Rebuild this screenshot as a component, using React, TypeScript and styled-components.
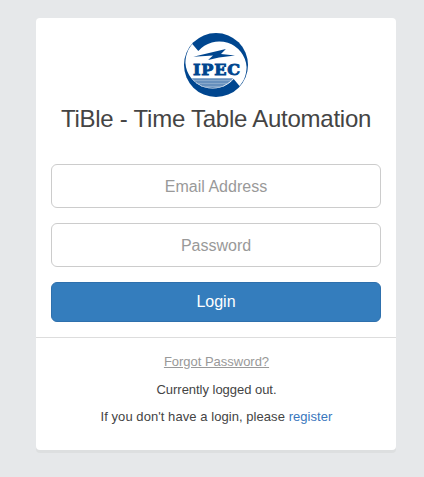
import React from "react";
import styled, { createGlobalStyle } from "styled-components";

const GlobalStyle = createGlobalStyle`
  *, *::before, *::after { box-sizing: border-box; }
  body {
    margin: 0;
    background: #e6e8ea;
    color: #444;
    font-family: "Liberation Sans", Arial, sans-serif;
  }
`;

const Page = styled.main`
  display: flex;
  justify-content: center;
  align-items: flex-start;
  min-height: 477px;
  padding: 18px 28px 0 36px;
`;

const Card = styled.section`
  width: 360px;
  height: 432px;
  background: #fff;
  border-radius: 4px;
  box-shadow: 0 3px 0 #dddfe0;
`;

const Header = styled.header`
  display: flex;
  flex-direction: column;
  align-items: center;
  height: 146px;
  padding-top: 15px;
`;

const LogoImage = styled.svg`
  display: block;
  width: 64px;
  height: 64px;
`;

const LogoText = styled.text`
  font-family: "DejaVu Serif", serif;
  font-size: 15.5px;
  font-weight: 700;
  fill: #00468f;
  stroke: #00468f;
  stroke-width: 0.9px;
`;

const Title = styled.h1`
  margin: 8px 0 0;
  font-size: 24px;
  font-weight: 400;
  line-height: 28px;
  letter-spacing: -0.25px;
  white-space: nowrap;
`;

const Form = styled.form`
  display: flex;
  flex-direction: column;
  gap: 15px;
  padding: 0 15px 15px;
`;

const Field = styled.input`
  width: 100%;
  height: 44px;
  padding: 1px 12px 0;
  border: 1px solid #ccc;
  border-radius: 6px;
  background: #fff;
  color: #444;
  font: 16px "Liberation Sans", Arial, sans-serif;
  text-align: center;
  &::placeholder { color: #999; opacity: 1; }
`;

const SubmitButton = styled.button`
  height: 40px;
  padding: 0 0 1px;
  border: 1px solid #2e70ad;
  border-radius: 6px;
  background: #347dbd;
  color: #fff;
  font: 16px "Liberation Sans", Arial, sans-serif;
  cursor: pointer;
`;

const Footer = styled.footer`
  border-top: 1px solid #ddd;
  padding: 14px 0 0 1px;
  text-align: center;
  font-size: 13px;
`;

const Line = styled.p<{ $tracking?: number }>`
  margin: 0 0 7px;
  line-height: 20.5px;
  letter-spacing: ${({ $tracking = 0 }) => $tracking}px;
`;

const Link = styled.a<{ $muted?: boolean }>`
  color: ${({ $muted }) => ($muted ? "#999" : "#3976bd")};
  text-decoration: ${({ $muted }) => ($muted ? "underline" : "none")};
`;

function Logo() {
  return (
    <LogoImage viewBox="0 0 64 64" role="img" aria-label="IPEC">
      <circle cx="32" cy="32" r="32" fill="#00468f" />
      <path
        fill="#fff"
        d="M8.3 11 L14.3 18 A27.5 27.5 0 0 1 62.6 34 C62.4 42 60 48 55.5 53 L49.7 46 A27.5 27.5 0 0 1 1.4 30 C1.6 22 4 16 8.3 11Z"
      />
      <path fill="#6790bd" d="M7.7 45.2H49.3A27 27 0 0 1 7.7 45.2Z" />
      <path d="M9 47.5H48M12 50.5H45M17 53.5H40" stroke="#9db9d5" strokeWidth=".6" />
      <path
        fill="#00468f"
        d="M9.3 23.8L25 20L41.9 16L37 21L51 22.4L35 24.5L24.1 27L29 22.5Z"
      />
      <LogoText x="9" y="41.7" textLength="48" letterSpacing="0.8" lengthAdjust="spacingAndGlyphs">
        IPEC
      </LogoText>
    </LogoImage>
  );
}

export default function App() {
  return (
    <>
      <GlobalStyle />
      <Page>
        <Card>
          <Header>
            <Logo />
            <Title>TiBle - Time Table Automation</Title>
          </Header>
          <Form onSubmit={(event) => event.preventDefault()}>
            <Field type="email" placeholder="Email Address" aria-label="Email Address" />
            <Field type="password" placeholder="Password" aria-label="Password" />
            <SubmitButton type="submit">Login</SubmitButton>
          </Form>
          <Footer>
            <Line $tracking={-0.02}><Link href="#" $muted>Forgot Password?</Link></Line>
            <Line $tracking={-0.03}>Currently logged out.</Line>
            <Line $tracking={0.06}>If you don't have a login, please <Link href="#">register</Link></Line>
          </Footer>
        </Card>
      </Page>
    </>
  );
}
